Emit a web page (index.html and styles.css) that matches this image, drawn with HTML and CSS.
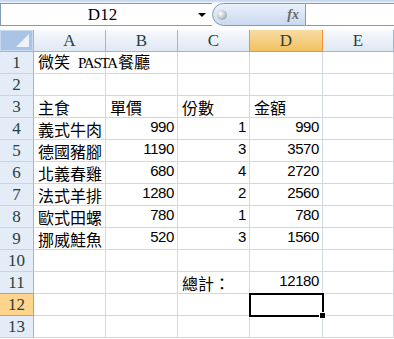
FILE: index.html
```html
<!DOCTYPE html>
<html>
<head>
    <title>微笑 PASTA 餐廳</title>
    <link rel="stylesheet" href="styles.css">
</head>
<body>
    <div id="excel">
        <div class="formulaBar">
            <div class="nameBox">
                <span class="nameText">D12</span>
                <span class="dropArrow"></span>
            </div>
            <div class="fxPill">
                <span class="knob"></span>
                <span class="fx">fx</span>
            </div>
            <div class="formulaInput"></div>
        </div>

        <div class="sheet">
            <div class="corner"></div>
            <div class="colHead">A</div>
            <div class="colHead">B</div>
            <div class="colHead">C</div>
            <div class="colHead active">D</div>
            <div class="colHead">E</div>

            <div class="rowHead">1</div>
            <div class="cell"><span>微笑<span class="latin">PASTA</span>餐廳</span></div>
            <div class="cell"></div>
            <div class="cell"></div>
            <div class="cell"></div>
            <div class="cell"></div>

            <div class="rowHead">2</div>
            <div class="cell"></div>
            <div class="cell"></div>
            <div class="cell"></div>
            <div class="cell"></div>
            <div class="cell"></div>

            <div class="rowHead">3</div>
            <div class="cell">主食</div>
            <div class="cell">單價</div>
            <div class="cell">份數</div>
            <div class="cell">金額</div>
            <div class="cell"></div>

            <div class="rowHead">4</div>
            <div class="cell">義式牛肉</div>
            <div class="cell num">990</div>
            <div class="cell num">1</div>
            <div class="cell num">990</div>
            <div class="cell"></div>

            <div class="rowHead">5</div>
            <div class="cell">德國豬腳</div>
            <div class="cell num">1190</div>
            <div class="cell num">3</div>
            <div class="cell num">3570</div>
            <div class="cell"></div>

            <div class="rowHead">6</div>
            <div class="cell">北義春雞</div>
            <div class="cell num">680</div>
            <div class="cell num">4</div>
            <div class="cell num">2720</div>
            <div class="cell"></div>

            <div class="rowHead">7</div>
            <div class="cell">法式羊排</div>
            <div class="cell num">1280</div>
            <div class="cell num">2</div>
            <div class="cell num">2560</div>
            <div class="cell"></div>

            <div class="rowHead">8</div>
            <div class="cell">歐式田螺</div>
            <div class="cell num">780</div>
            <div class="cell num">1</div>
            <div class="cell num">780</div>
            <div class="cell"></div>

            <div class="rowHead">9</div>
            <div class="cell">挪威鮭魚</div>
            <div class="cell num">520</div>
            <div class="cell num">3</div>
            <div class="cell num">1560</div>
            <div class="cell"></div>

            <div class="rowHead">10</div>
            <div class="cell"></div>
            <div class="cell"></div>
            <div class="cell"></div>
            <div class="cell"></div>
            <div class="cell"></div>

            <div class="rowHead">11</div>
            <div class="cell"></div>
            <div class="cell"></div>
            <div class="cell">總計：</div>
            <div class="cell num">12180</div>
            <div class="cell"></div>

            <div class="rowHead active">12</div>
            <div class="cell"></div>
            <div class="cell"></div>
            <div class="cell"></div>
            <div class="cell selected"></div>
            <div class="cell"></div>

            <div class="rowHead">13</div>
            <div class="cell"></div>
            <div class="cell"></div>
            <div class="cell"></div>
            <div class="cell"></div>
            <div class="cell"></div>
        </div>
    </div>
</body>
</html>
```

FILE: styles.css
```css
/* Excel 2007 style sheet view */
body {
    margin: 0;
    background-color: #fff;
    font-family: "Noto Sans CJK TC", sans-serif;
}

#excel {
    width: 394px;
    height: 339px;
    overflow: hidden;
}

.formulaBar {
    display: flex;
    height: 30px;
    box-sizing: border-box;
    padding: 3px 0 4px 0;
    background: linear-gradient(#c4d5eb 0, #d6e2f2 2px, #fff 3px);
}

.nameBox {
    display: flex;
    align-items: center;
    width: 212px;
    box-sizing: border-box;
    border: 1px solid #7f9db9;
    border-right: none;
    background-color: #fff;
}

.nameText {
    flex: 1;
    text-align: center;
    font-family: "Liberation Serif", serif;
    font-size: 17px;
    color: #000;
    padding-left: 6px;
}

.dropArrow {
    width: 0;
    height: 0;
    margin-right: 6px;
    border-left: 4px solid transparent;
    border-right: 4px solid transparent;
    border-top: 4px solid #000;
}

.fxPill {
    display: flex;
    align-items: center;
    justify-content: space-between;
    width: 94px;
    box-sizing: border-box;
    border: 1px solid #7f9db9;
    border-radius: 12px 0 0 12px;
    background: linear-gradient(#eaf1fb, #c9d9ef);
    padding: 0 6px 0 4px;
}

.knob {
    width: 10px;
    height: 10px;
    border-radius: 50%;
    background: radial-gradient(circle at 35% 35%, #fff, #a9aeb5 70%, #8d939b);
}

.fx {
    font-family: "Liberation Serif", serif;
    font-style: italic;
    font-weight: bold;
    font-size: 14px;
    color: #6a6a6a;
}

.formulaInput {
    flex: 1;
    border-top: 1px solid #7f9db9;
    border-bottom: 1px solid #7f9db9;
    background-color: #fff;
}

.sheet {
    display: grid;
    grid-template-columns: 34px 72px 72px 72px 73px 71px;
    grid-template-rows: 22px;
    grid-auto-rows: 22px;
}

.corner {
    box-sizing: border-box;
    border-right: 1px solid #9eb6ce;
    border-bottom: 1px solid #9eb6ce;
    background-color: #aac4e6;
    box-shadow: inset 0 0 0 1px #c8d9f0;
    position: relative;
}

.corner::after {
    content: "";
    position: absolute;
    right: 4px;
    bottom: 4px;
    width: 0;
    height: 0;
    border-left: 13px solid transparent;
    border-bottom: 13px solid #eef3fa;
}

.colHead {
    display: flex;
    align-items: center;
    justify-content: center;
    box-sizing: border-box;
    border-right: 1px solid #9eb6ce;
    border-bottom: 1px solid #9eb6ce;
    background: linear-gradient(#f6f9fd, #e0e8f3);
    font-family: "Liberation Serif", serif;
    font-size: 17px;
    color: #27413e;
}

.colHead.active {
    background: linear-gradient(#f9dca4, #f1c15f);
    border-right-color: #f29436;
    border-bottom-color: #f29436;
    box-shadow: -1px 0 0 #f29436;
}

.rowHead {
    display: flex;
    align-items: center;
    justify-content: center;
    box-sizing: border-box;
    border-right: 1px solid #9eb6ce;
    border-bottom: 1px solid #c5d5e9;
    background-color: #e4ecf7;
    font-family: "Liberation Serif", serif;
    font-size: 17px;
    color: #27413e;
    padding-top: 1px;
}

.rowHead.active {
    background-color: #ffd58d;
    border-right-color: #f29436;
    border-bottom-color: #f29436;
    box-shadow: 0 -1px 0 #f29436;
}

.cell {
    display: flex;
    align-items: flex-end;
    box-sizing: border-box;
    border-right: 1px solid #d0d7e5;
    border-bottom: 1px solid #d0d7e5;
    padding: 0 3px 0 4px;
    font-size: 16px;
    line-height: 20px;
    color: #000;
    white-space: nowrap;
}

.num {
    justify-content: flex-end;
    font-family: "Liberation Sans", sans-serif;
    font-size: 15px;
    letter-spacing: -0.4px;
    padding-bottom: 2px;
}

.latin {
    font-family: "Liberation Serif", serif;
    font-size: 15px;
    letter-spacing: -1.2px;
    margin: 0 1px 0 8px;
}

.selected {
    position: relative;
    outline: 2px solid #000;
    outline-offset: -1px;
}

.selected::after {
    content: "";
    position: absolute;
    right: -4px;
    bottom: -4px;
    width: 5px;
    height: 5px;
    background-color: #000;
    border: 1px solid #fff;
}
```
